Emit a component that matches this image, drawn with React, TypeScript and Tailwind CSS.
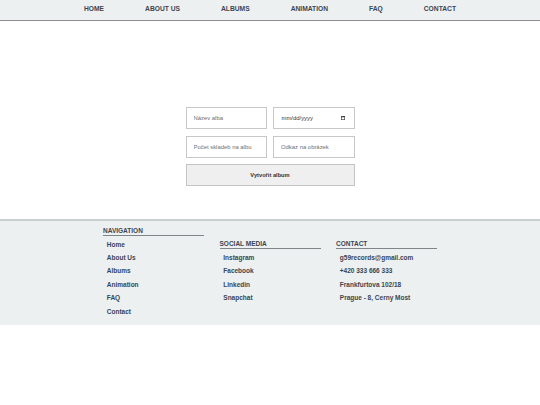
import React from 'react';

const navLinks = ['HOME', 'ABOUT US', 'ALBUMS', 'ANIMATION', 'FAQ', 'CONTACT'];

const footerColumns = [
  { title: 'Navigation', items: ['Home', 'About Us', 'Albums', 'Animation', 'FAQ', 'Contact'] },
  { title: 'Social media', items: ['Instagram', 'Facebook', 'Linkedin', 'Snapchat'] },
  { title: 'Contact', items: ['g59records@gmail.com', '+420 333 666 333', 'Frankfurtova 102/18', 'Prague - 8, Cerny Most'] },
];

function CalendarIcon() {
  return (
    <svg width="4" height="4" viewBox="0 0 8 8" className="shrink-0">
      <rect x="0.6" y="0.6" width="6.8" height="6.8" fill="none" stroke="#333" strokeWidth="1.2" />
      <rect x="0.6" y="0.6" width="6.8" height="2" fill="#333" />
    </svg>
  );
}

function TextField({ placeholder }: { placeholder: string }) {
  return (
    <input
      type="text"
      placeholder={placeholder}
      className="h-[22px] w-full border border-[#c8c8c8] bg-white pl-[7px] text-[5.9px] text-[#333] outline-none placeholder:text-[#6f6f6f]"
    />
  );
}

export default function App() {
  return (
    <div className="min-h-[405px] bg-white font-['Liberation_Sans',Arial,sans-serif]">
      <nav className="flex h-[21px] items-center justify-center gap-[41px] border-b-[1.5px] border-[#8c8c8c] bg-[#ecf0f1] pb-[1px]">
        {navLinks.map((link) => (
          <a key={link} className="text-[6.7px] font-bold text-[#3a4552]">
            {link}
          </a>
        ))}
      </nav>

      <main className="flex flex-col items-center pt-[86px] pb-[32.5px]">
        <form className="grid w-[169px] grid-cols-2 gap-x-[6px] gap-y-[6.5px]">
          <TextField placeholder="Název alba" />
          <div className="flex h-[22px] items-center justify-between border border-[#c8c8c8] bg-white pl-[7.5px] pr-[8.5px]">
            <span className="text-[5.9px] text-[#333]">mm/dd/yyyy</span>
            <CalendarIcon />
          </div>
          <TextField placeholder="Počet skladeb na albu" />
          <TextField placeholder="Odkaz na obrázek" />
          <button
            type="button"
            className="col-span-2 h-[22px] border border-[#c4c4c4] bg-[#efefef] text-[5.7px] font-bold text-[#333]"
          >
            Vytvořit album
          </button>
        </form>
      </main>

      <footer className="border-t-2 border-[#c9cecf] bg-[#ecf0f1] pt-[5px] pb-[6.6px]">
        <div className="flex items-center justify-center gap-[15.5px]">
          {footerColumns.map((col) => (
            <div key={col.title} className="w-[101px]">
              <h3 className="h-[10px] border-b border-[#7f8588] text-[6.5px] leading-[9px] font-bold uppercase text-[#3a4552]">
                {col.title}
              </h3>
              <ul className="mt-[2px]">
                {col.items.map((item) => (
                  <li key={item} className="pl-[3.8px] text-[6.5px] leading-[13.4px] font-bold text-[#3a4552]">
                    {item}
                  </li>
                ))}
              </ul>
            </div>
          ))}
        </div>
      </footer>
    </div>
  );
}
